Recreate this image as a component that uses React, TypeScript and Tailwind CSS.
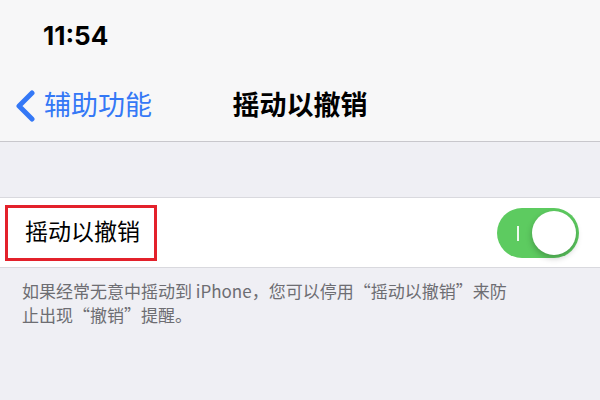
import { useState } from "react";

const cjk = "font-['Inter','Noto_Sans_CJK_SC',sans-serif]";

function Toggle({ on, onChange }: { on: boolean; onChange: (v: boolean) => void }) {
  return (
    <button
      onClick={() => onChange(!on)}
      className={`relative h-[50px] w-[82px] rounded-full transition-colors ${
        on ? "bg-[#5dcb60]" : "bg-[#e5e5ea]"
      }`}
    >
      {on && <span className="absolute left-[20px] top-[18px] h-[15px] w-[2px] bg-white/90" />}
      <span
        className={`absolute top-[3px] h-[44px] w-[44px] rounded-full bg-white shadow-[0_3px_6px_rgba(0,0,0,0.25)] transition-all ${
          on ? "right-[3px]" : "left-[3px]"
        }`}
      />
    </button>
  );
}

export default function App() {
  const [enabled, setEnabled] = useState(true);

  return (
    <div className={`h-[400px] w-[600px] overflow-hidden bg-[#efeff4] ${cjk}`}>
      {/* Status + nav */}
      <div className="border-b border-[#c8c7cc] bg-[#f7f7f8]">
        <div className="h-[70px] pl-[43px] pt-[19px] text-[26px] font-bold leading-[34px] text-black">
          11:54
        </div>
        <div className="relative flex h-[71px] items-center">
          <button className="flex items-center gap-[9px] pl-[15px] text-[#3478f6]">
            <svg width="20" height="32" viewBox="0 0 20 32" fill="none">
              <path
                d="M17 3 L4 16 L17 29"
                stroke="currentColor"
                strokeWidth="5"
                strokeLinecap="round"
                strokeLinejoin="round"
              />
            </svg>
            <span className="text-[27px] leading-none">辅助功能</span>
          </button>
          <h1 className="absolute left-1/2 -translate-x-1/2 text-[27px] font-semibold leading-none text-black">
            摇动以撤销
          </h1>
        </div>
      </div>

      {/* Setting row */}
      <div className="mt-[55px] flex h-[71px] items-center justify-between border-y border-[#d9d9de] bg-white">
        <div className="ml-[5px] flex h-[56px] w-[152px] items-center border-[3px] border-[#e3212b] pl-[17px]">
          <span className="text-[23px] leading-none text-black">摇动以撤销</span>
        </div>
        <div className="mr-[21px] flex">
          <Toggle on={enabled} onChange={setEnabled} />
        </div>
      </div>

      <p className="w-[512px] pl-[22px] pt-[11px] font-['Noto_Sans_CJK_SC',sans-serif] text-[17px] leading-[24px] text-[#6d6d72]">
        如果经常无意中摇动到 iPhone，您可以停用“摇动以撤销”来防止出现“撤销”提醒。
      </p>
    </div>
  );
}
